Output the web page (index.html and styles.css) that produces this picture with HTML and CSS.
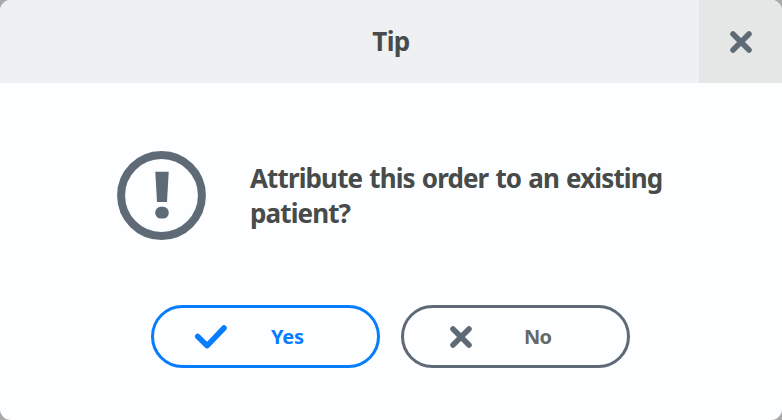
FILE: index.html
```
<!DOCTYPE html>
<html lang="en">
<head>
<meta charset="utf-8">
<title>Tip</title>
<link rel="stylesheet" href="styles.css">
</head>
<body>
<section class="dialog" role="alertdialog">
  <header class="header">
    <h1 class="title">Tip</h1>
    <button class="close" aria-label="Close">
      <svg width="24" height="24" viewBox="0 0 24 24"><path class="stroke" d="M4 4 20 20M20 4 4 20"/></svg>
    </button>
  </header>
  <main class="content">
    <svg class="alert" width="90" height="90" viewBox="0 0 90 90">
      <circle class="ring" cx="44.5" cy="44.5" r="40.4"/>
      <path class="mark" d="M38.3 20.7H51.7L50 51H40Z"/>
      <rect class="mark" x="38.3" y="55.8" width="13.4" height="11.8" rx="5.4"/>
    </svg>
    <p class="message">Attribute this order to an existing<br>patient?</p>
  </main>
  <footer class="actions">
    <button class="button yes">
      <svg class="check" width="34" height="26" viewBox="0 0 34 26"><path class="stroke" d="M3.7 12.5 13.2 21.7 30 4"/></svg>
      <span class="label">Yes</span>
    </button>
    <button class="button no">
      <svg class="cross" width="24" height="24" viewBox="0 0 24 24"><path class="stroke" d="M4 4 20 20M20 4 4 20"/></svg>
      <span class="label">No</span>
    </button>
  </footer>
</section>
</body>
</html>
```
FILE: styles.css
```
* { box-sizing: border-box; }
body { margin: 0; background: #a9a9a9; }
button { margin: 0; padding: 0; font: inherit; }
svg { display: block; flex: none; }
.dialog {
  width: 782px;
  height: 420px;
  overflow: hidden;
  border-radius: 11px;
  background: #fdfeff;
  color: #474b49;
  font-family: "Noto Sans", "Open Sans", sans-serif;
}
.header {
  display: grid;
  grid-template-columns: 83px 1fr 83px;
  height: 83px;
  background: #eff0f2;
}
.title {
  grid-column: 2;
  margin: 0;
  text-align: center;
  font-size: 26px;
  font-weight: 700;
  letter-spacing: -0.6px;
  line-height: 83px;
}
.close {
  display: grid;
  place-items: center;
  border: 0;
  background: #e5e7e6;
  color: #5e6a76;
}
.stroke { fill: none; stroke: currentColor; stroke-width: 5.5; stroke-linecap: round; }
.check .stroke { stroke-linejoin: round; }
.content {
  display: flex;
  height: 222px;
  padding: 68px 0 0 117px;
}
.alert { color: #5e6a76; }
.ring { fill: none; stroke: currentColor; stroke-width: 8; }
.mark { fill: currentColor; }
.message {
  margin: 10px 0 0 43px;
  font-size: 26px;
  font-weight: 700;
  letter-spacing: -0.88px;
  word-spacing: 1.2px;
  line-height: 35px;
  white-space: nowrap;
}
.actions { display: flex; gap: 21px; padding-left: 151px; }
.button {
  display: flex;
  align-items: center;
  width: 229px;
  height: 63px;
  border: 3px solid currentColor;
  border-radius: 32px;
  background: transparent;
}
.yes { padding-left: 40px; color: #067cff; }
.no { padding-left: 45px; color: #5e6a76; }
.label { font-size: 20px; font-weight: 700; line-height: 28px; }
.yes .label { margin-left: 43px; letter-spacing: -0.2px; }
.no .label { margin-left: 51px; color: #656967; letter-spacing: -0.8px; }
```
